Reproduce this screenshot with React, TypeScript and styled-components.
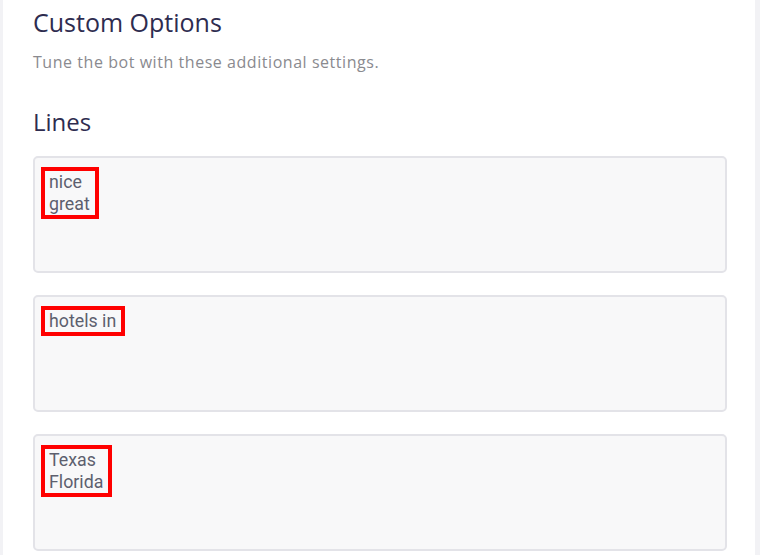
import React from "react";
import styled, { createGlobalStyle } from "styled-components";

const Global = createGlobalStyle`
  html, body { margin: 0; padding: 0; background: #ffffff; }
  body { font-family: "Open Sans", "Liberation Sans", sans-serif; }
`;

const Frame = styled.div`
  display: flex;
  width: 760px;
  height: 555px;
  overflow: hidden;
  background: #ffffff;
`;

const EdgeStrip = styled.div<{ $w: number }>`
  flex: 0 0 ${(p) => p.$w}px;
  background: #f2f2f5;
`;

const Panel = styled.div`
  flex: 1;
  padding: 0 28px 0 30px;
  display: flex;
  flex-direction: column;
`;

const Title = styled.h1`
  margin: 6px 0 0;
  font-family: "Open Sans", sans-serif;
  font-weight: 500;
  font-size: 25px;
  line-height: 32px;
  color: #2e2c4f;
`;

const Subtitle = styled.p`
  margin: 14px 0 0;
  font-family: "Open Sans", sans-serif;
  font-size: 16px;
  letter-spacing: 0.55px;
  line-height: 20px;
  color: #8a8a8f;
`;

const SectionTitle = styled.h2`
  margin: 34px 0 0;
  font-family: "Open Sans", sans-serif;
  font-weight: 500;
  font-size: 24px;
  line-height: 32px;
  color: #2e2c4f;
`;

const Fields = styled.div`
  margin-top: 18px;
  display: flex;
  flex-direction: column;
  gap: 22px;
`;

const TextBox = styled.div`
  box-sizing: border-box;
  height: 117px;
  border: 2px solid #e3e3e8;
  border-radius: 5px;
  background: #f8f8f9;
  padding: 9px 6px;
`;

const Marked = styled.span`
  display: inline-block;
  border: 4px solid #ff0000;
  padding: 0 5px 0 4px;
  font-family: Roboto, "Liberation Sans", sans-serif;
  font-size: 17.8px;
  line-height: 22px;
  color: #5d5f6e;
  white-space: pre;
`;

const fields = [["nice", "great"], ["hotels in"], ["Texas", "Florida"]];

export default function App() {
  return (
    <Frame>
      <Global />
      <EdgeStrip $w={3} />
      <Panel>
        <Title>Custom Options</Title>
        <Subtitle>Tune the bot with these additional settings.</Subtitle>
        <SectionTitle>Lines</SectionTitle>
        <Fields>
          {fields.map((lines, i) => (
            <TextBox key={i}>
              <Marked>{lines.join("\n")}</Marked>
            </TextBox>
          ))}
        </Fields>
      </Panel>
      <EdgeStrip $w={5} />
    </Frame>
  );
}
